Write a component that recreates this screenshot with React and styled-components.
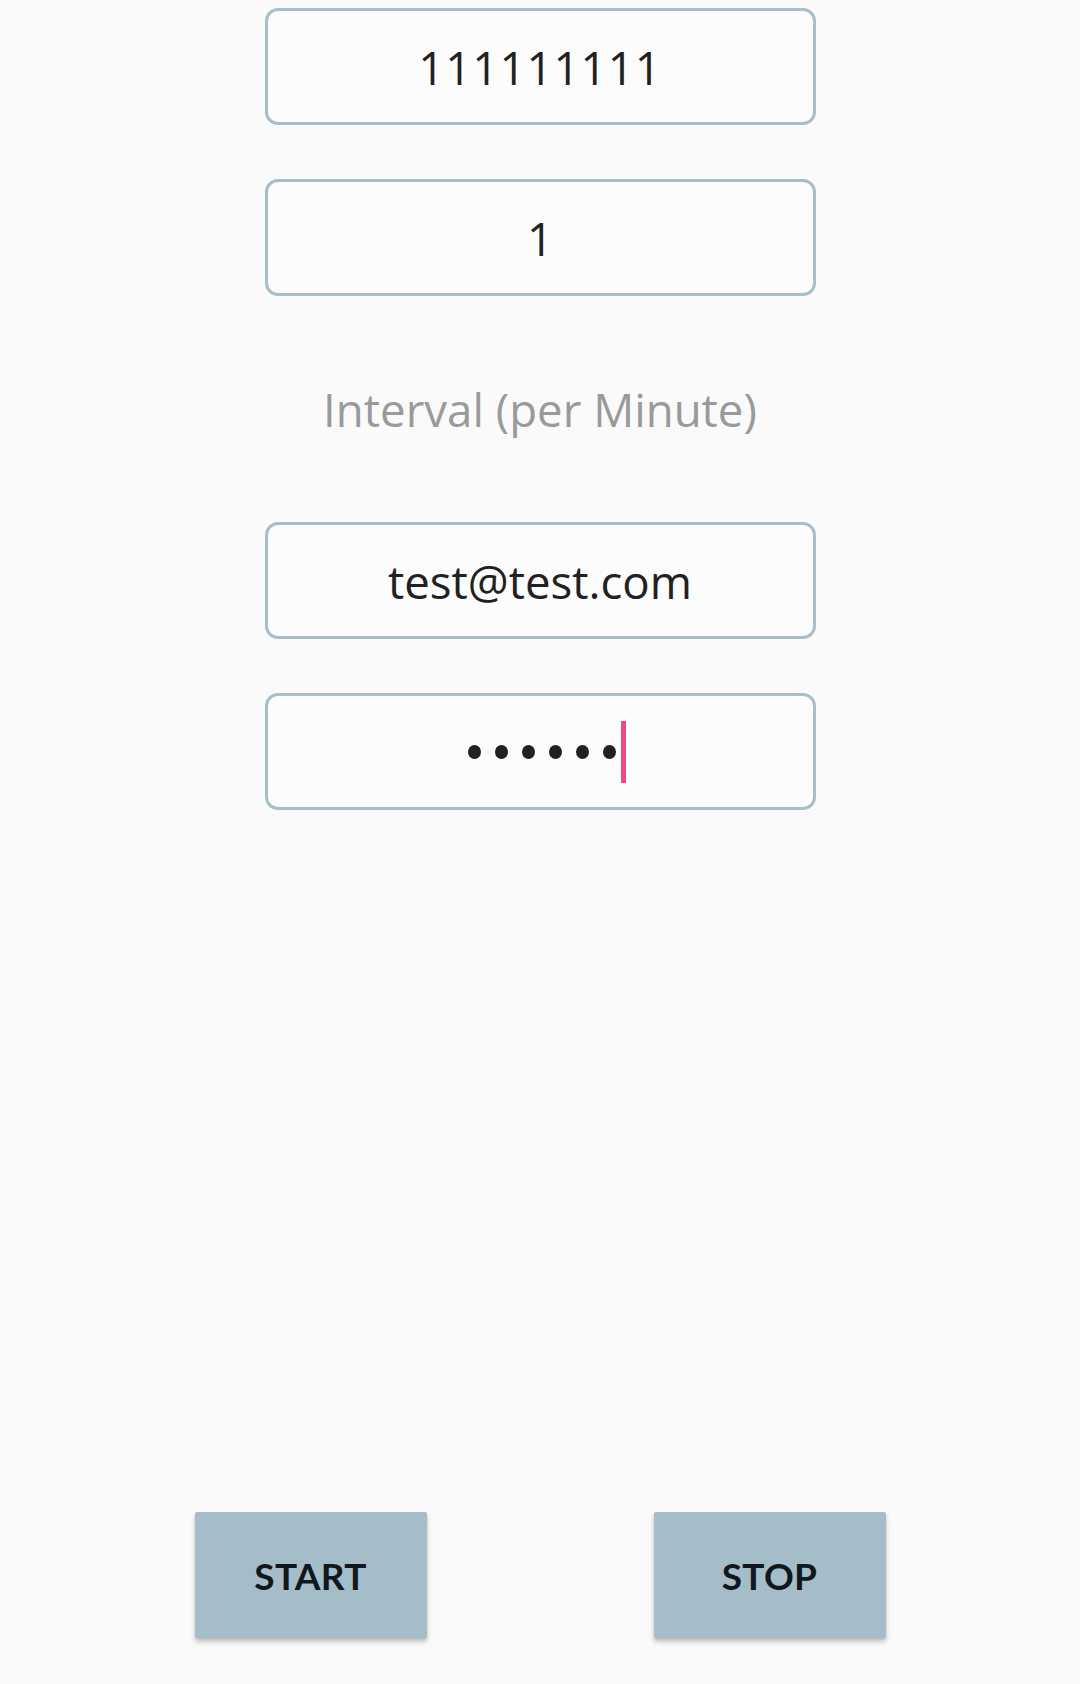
import React from "react";
import styled, { createGlobalStyle } from "styled-components";

const Global = createGlobalStyle`
  html, body { margin: 0; padding: 0; background: #fafafa; }
  body { font-family: "Open Sans", "Noto Sans", sans-serif; }
`;

const Screen = styled.div`
  width: 1080px;
  height: 1684px;
  box-sizing: border-box;
  padding-top: 8px;
  display: flex;
  flex-direction: column;
  align-items: center;
  background: #fafafa;
`;

const Field = styled.div`
  width: 551px;
  height: 117px;
  box-sizing: border-box;
  border: 3px solid #a8bec8;
  border-radius: 13px;
  background: #fcfcfc;
  display: flex;
  align-items: center;
  justify-content: center;
  margin-top: ${(p) => p.$gap || 0}px;
  font-family: "Open Sans", sans-serif;
  font-size: 45.6px;
  color: #212121;
  letter-spacing: ${(p) => p.$spacing || 0}px;
`;

const Label = styled.div`
  height: 226px;
  display: flex;
  align-items: center;
  justify-content: center;
  font-family: "Open Sans", sans-serif;
  font-size: 45.6px;
  color: #9a9a9a;
`;

const Dots = styled.span`
  display: flex;
  align-items: center;
  gap: 14px;
  margin-left: 14px;
`;

const Dot = styled.span`
  width: 13px;
  height: 14px;
  border-radius: 50%;
  background: #212121;
`;

const Caret = styled.span`
  width: 5px;
  height: 62px;
  background: #ec4a86;
  margin-left: 5px;
`;

const ButtonRow = styled.div`
  margin-top: auto;
  margin-bottom: 46px;
  display: flex;
  gap: 227px;
  justify-content: center;
  width: 100%;
`;

const Button = styled.button`
  width: 232px;
  height: 126px;
  border: none;
  border-radius: 2px;
  background: #a5bdc9;
  color: #11181d;
  font-family: Lato, "Open Sans", sans-serif;
  font-weight: 700;
  font-size: 37px;
  letter-spacing: 0.3px;
  box-shadow: 0 4px 5px rgba(0, 0, 0, 0.22), 0 1px 2px rgba(0, 0, 0, 0.1);
  padding: 0;
`;

export default function App() {
  return (
    <>
      <Global />
      <Screen>
        <Field $spacing={1}>111111111</Field>
        <Field $gap={54}>1</Field>
        <Label>Interval (per Minute)</Label>
        <Field>test@test.com</Field>
        <Field $gap={54}>
          <Dots>
            {Array.from({ length: 6 }).map((_, i) => (
              <Dot key={i} />
            ))}
          </Dots>
          <Caret />
        </Field>
        <ButtonRow>
          <Button>START</Button>
          <Button>STOP</Button>
        </ButtonRow>
      </Screen>
    </>
  );
}
